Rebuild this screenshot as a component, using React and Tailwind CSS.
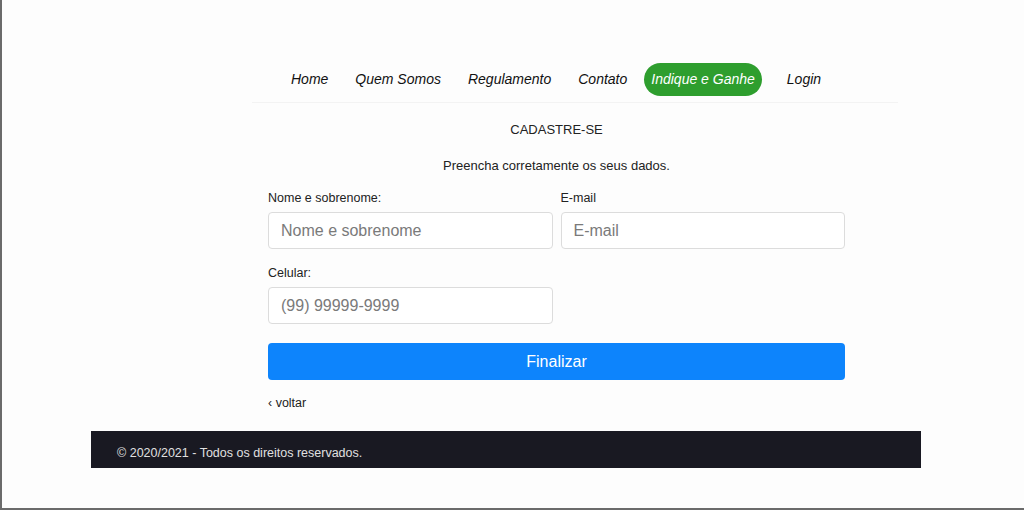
import React from 'react';

const links = ['Home', 'Quem Somos', 'Regulamento', 'Contato', 'Indique e Ganhe', 'Login'];

const Field = ({ label, placeholder }) => (
  <div className="flex flex-col">
    <label className="text-[12.5px] text-[#222] h-[15px] leading-[15px] mb-[6px]">{label}</label>
    <input
      className="h-[37px] w-full rounded-[4px] border border-[#dcdcdc] bg-white px-[12px] text-[16px] text-[#333] placeholder:text-[#7a7a7a] outline-none"
      placeholder={placeholder}
    />
  </div>
);

export default function App() {
  return (
    <div className="w-[1024px] h-[510px] bg-[#fdfdfd] border-l-[2px] border-b-[2px] border-[#6b6b6b] overflow-hidden font-['Liberation_Sans',Arial,sans-serif]">
      {/* top navigation */}
      <div className="ml-[250px] w-[646px] pt-[63px] pb-[6px] border-b border-[#f3f3f3]">
        <nav className="flex gap-[13px] pl-[32px] h-[33px] items-center">
          {links.map((l) =>
            l === 'Indique e Ganhe' ? (
              <a key={l} className="-ml-[3px] mr-[5px] h-[33px] flex items-center rounded-full bg-[#2e9e2e] px-[7px] text-[14px] italic text-white">
                {l}
              </a>
            ) : (
              <a key={l} className="px-[7px] text-[14px] italic text-[#111]">
                {l}
              </a>
            )
          )}
        </nav>
      </div>

      {/* cadastro */}
      <div className="ml-[266px] w-[577px] flex flex-col">
        <h2 className="mt-[19px] text-center text-[13px] text-[#222] h-[16px] leading-[16px]">CADASTRE-SE</h2>
        <p className="mt-[20px] text-center text-[13px] text-[#222] h-[16px] leading-[16px]">
          Preencha corretamente os seus dados.
        </p>
        <div className="mt-[17px] grid grid-cols-2 gap-x-[8px] gap-y-[17px]">
          <Field label="Nome e sobrenome:" placeholder="Nome e sobrenome" />
          <Field label="E-mail" placeholder="E-mail" />
          <Field label="Celular:" placeholder="(99) 99999-9999" />
        </div>
        <button className="mt-[19px] h-[37px] w-full rounded-[4px] bg-[#0d84fc] text-[16px] text-white">
          Finalizar
        </button>
        <a className="mt-[15px] text-[12.5px] text-[#222] h-[16px] leading-[16px]">‹ voltar</a>
      </div>

      {/* rodapé */}
      <footer className="mt-[20px] ml-[89px] w-[830px] h-[37px] bg-[#191922] flex items-center pl-[26px] pt-[8px] text-[12.5px] text-[#e0e0e0]">
        © 2020/2021 - Todos os direitos reservados.
      </footer>
    </div>
  );
}
